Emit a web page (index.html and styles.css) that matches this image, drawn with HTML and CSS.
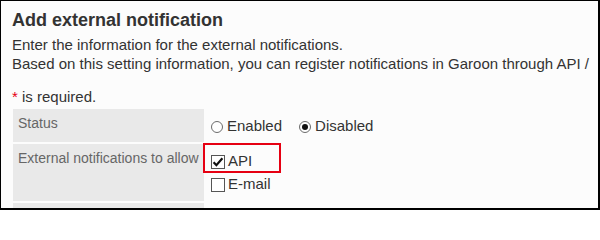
FILE: index.html
```html
<!DOCTYPE html>
<html lang="en">
<head>
<meta charset="utf-8">
<title>Add external notification</title>
<link rel="stylesheet" href="styles.css">
</head>
<body>
<div class="frame">
  <h1 class="title">Add external notification</h1>
  <p class="desc">Enter the information for the external notifications.<br>Based on this setting information, you can register notifications in Garoon through API /</p>
  <p class="required"><span class="star">*</span> is required.</p>
  <table class="form">
    <tr>
      <th class="label">Status</th>
      <td class="value">
        <div class="options">
          <span class="opt"><svg class="radio" viewBox="0 0 12 12"><circle cx="6" cy="6" r="5.5" fill="#fff" stroke="#6b6b6b"/></svg>Enabled</span>
          <span class="opt"><svg class="radio" viewBox="0 0 12 12"><circle cx="6" cy="6" r="5.5" fill="#fff" stroke="#6b6b6b"/><circle cx="6" cy="6" r="3" fill="#111"/></svg>Disabled</span>
        </div>
      </td>
    </tr>
    <tr>
      <th class="label">External notifications to allow</th>
      <td class="value value-rel">
        <span class="highlight"></span>
        <div class="opt opt-line"><svg class="check" viewBox="0 0 14 14"><rect x="0.5" y="0.5" width="13" height="13" fill="#fff" stroke="#555"/><path d="M2.6 7.2 L5.4 10.2 L11.4 3.2" fill="none" stroke="#111" stroke-width="2.2"/></svg>API</div>
        <div class="opt opt-line"><svg class="check" viewBox="0 0 14 14"><rect x="0.5" y="0.5" width="13" height="13" fill="#fff" stroke="#555"/></svg>E-mail</div>
      </td>
    </tr>
    <tr class="row-last">
      <th class="label"></th>
      <td class="value"></td>
    </tr>
  </table>
</div>
</body>
</html>
```
FILE: styles.css
```css
html, body {
  margin: 0;
  padding: 0;
  width: 600px;
  height: 210px;
  overflow: hidden;
}
body {
  font-family: "Liberation Sans", Arial, sans-serif;
  color: #333;
}
.frame {
  box-sizing: border-box;
  width: 600px;
  height: 210px;
  overflow: hidden;
  background: #fcfcfc;
  border-top: 1px solid #000;
  border-left: 1px solid #000;
  border-right: 2px solid #000;
  border-bottom: 2px solid #000;
  padding: 7px 0 0 11px;
}
.title {
  margin: 0 0 3px;
  font-size: 18px;
  line-height: 24px;
  font-weight: bold;
  color: #333;
  white-space: nowrap;
}
.desc {
  margin: 0;
  font-size: 15px;
  line-height: 19px;
  white-space: nowrap;
}
.required {
  margin: 14px 0 0;
  font-size: 15px;
  line-height: 19px;
}
.star {
  color: #e60012;
}
.form {
  border-collapse: separate;
  border-spacing: 1px 2px;
  margin-top: 1px;
}
.label {
  width: 186px;
  background: #e9e9e9;
  color: #666;
  font-weight: normal;
  font-size: 14px;
  line-height: 19px;
  text-align: left;
  vertical-align: top;
  padding: 5px 0 0 5px;
  white-space: nowrap;
}
.value {
  font-size: 15px;
  line-height: 23px;
  padding: 5px 6px 5px 6px;
  vertical-align: top;
  color: #333;
}
.value-rel {
  position: relative;
  padding-bottom: 6px;
}
.options {
  display: flex;
  gap: 17px;
}
.opt {
  display: flex;
  align-items: baseline;
  white-space: nowrap;
}
.radio {
  width: 12px;
  height: 12px;
  margin-right: 4px;
  align-self: center;
  position: relative;
  top: 1px;
}
.check {
  width: 14px;
  height: 14px;
  margin-right: 3px;
  align-self: center;
  position: relative;
  top: 1px;
}
.highlight {
  position: absolute;
  left: -2px;
  top: -1px;
  width: 74px;
  height: 26px;
  border: 2px solid #e60012;
}
.row-last .label {
  height: 30px;
}
```
